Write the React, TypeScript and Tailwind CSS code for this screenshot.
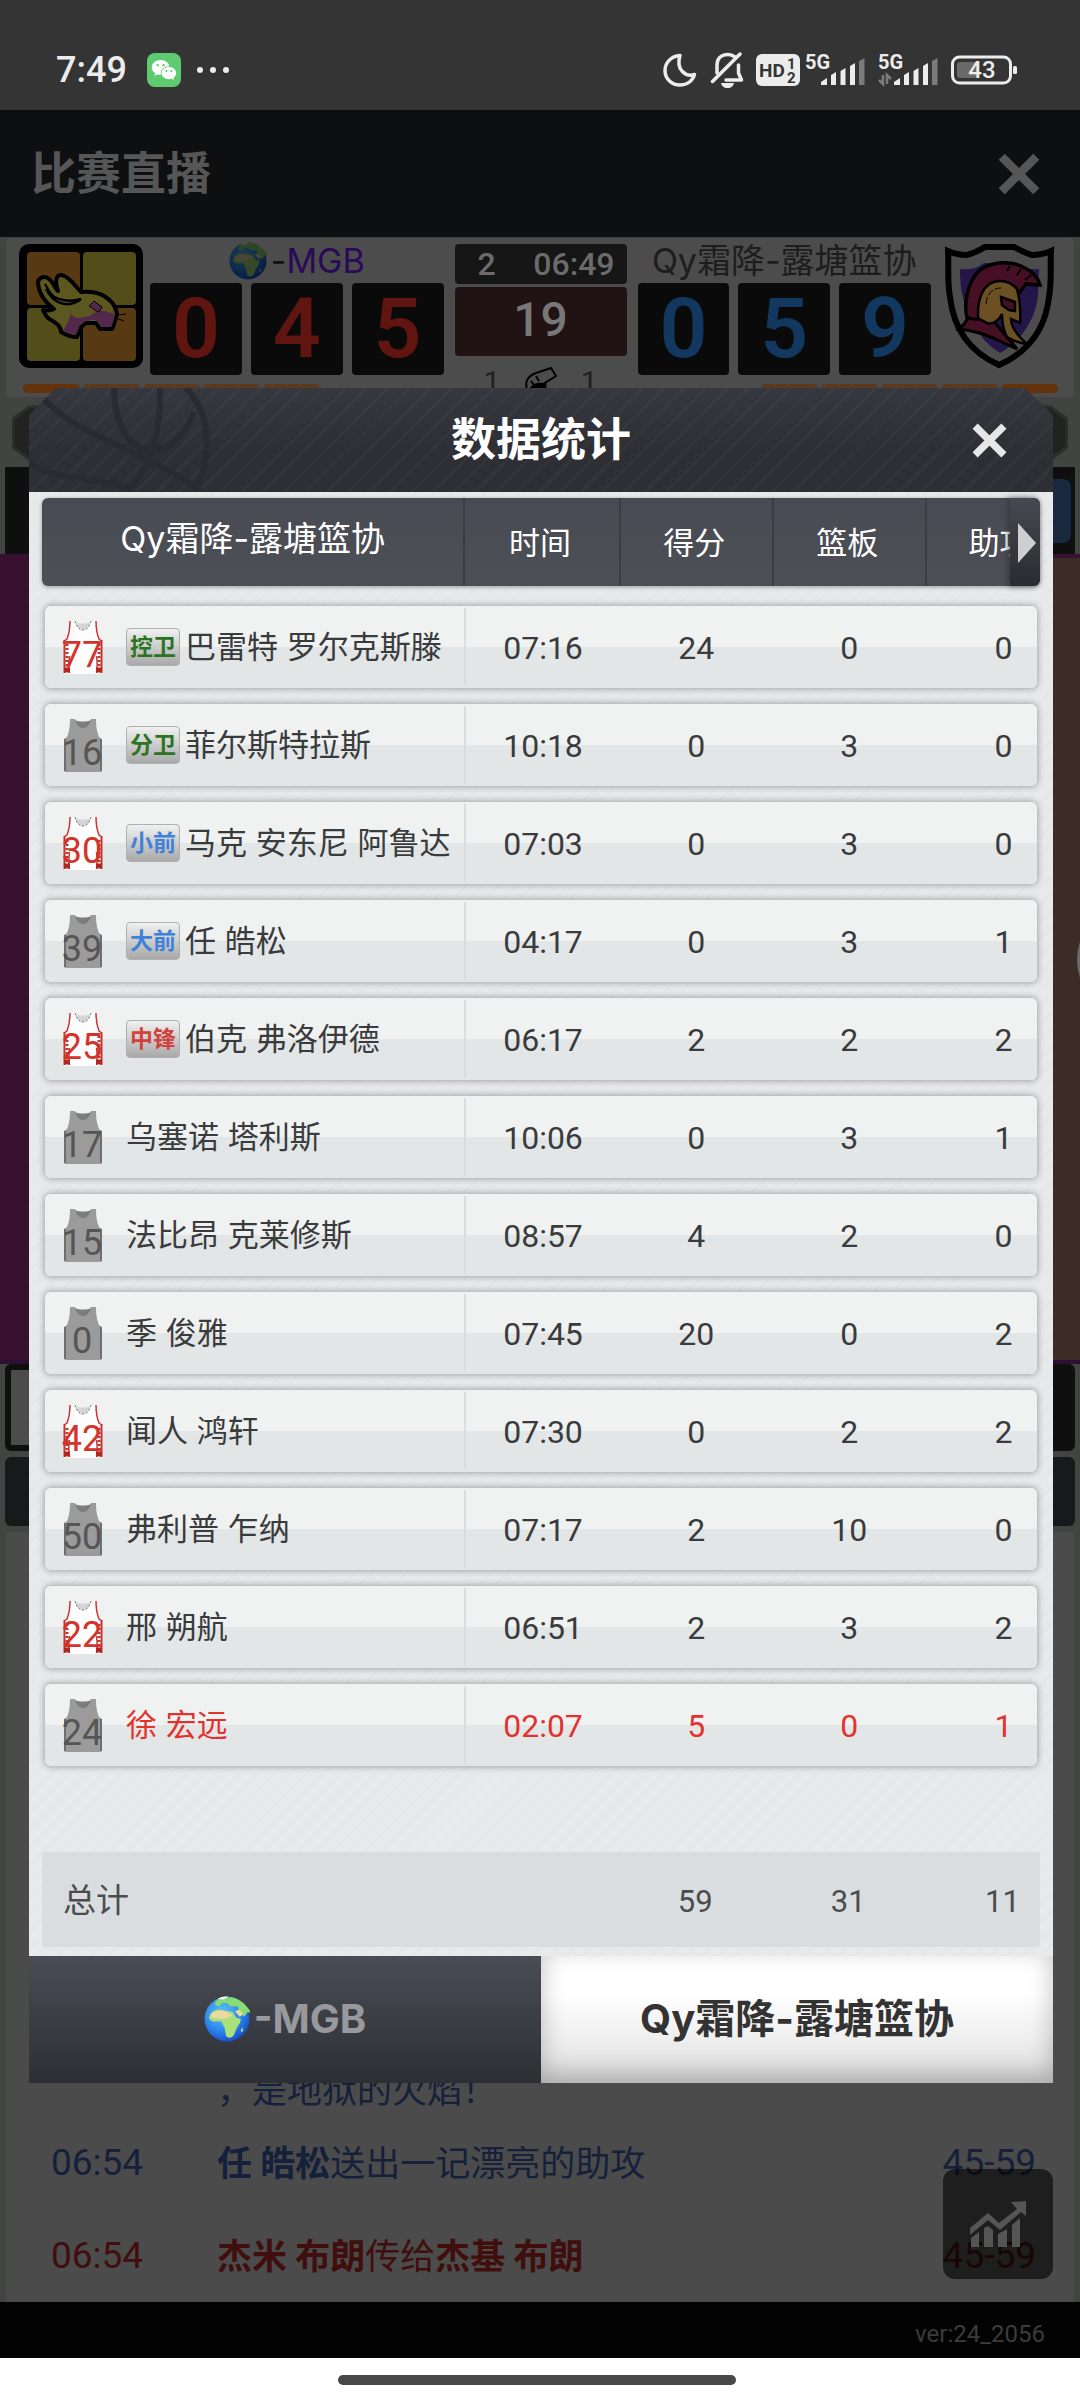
import { ReactNode, useState } from "react"
import { clsx } from "clsx"
import { AiFillWechat } from "react-icons/ai"

type Player = {
  number: string
  home: boolean
  position?: "控卫" | "分卫" | "小前" | "大前" | "中锋"
  name: string
  stats: string[]
  highlight?: boolean
}

const players: Player[] = [
  { number: "77", home: true, position: "控卫", name: "巴雷特 罗尔克斯滕", stats: ["07:16", "24", "0", "0"] },
  { number: "16", home: false, position: "分卫", name: "菲尔斯特拉斯", stats: ["10:18", "0", "3", "0"] },
  { number: "30", home: true, position: "小前", name: "马克 安东尼 阿鲁达", stats: ["07:03", "0", "3", "0"] },
  { number: "39", home: false, position: "大前", name: "任 皓松", stats: ["04:17", "0", "3", "1"] },
  { number: "25", home: true, position: "中锋", name: "伯克 弗洛伊德", stats: ["06:17", "2", "2", "2"] },
  { number: "17", home: false, name: "乌塞诺 塔利斯", stats: ["10:06", "0", "3", "1"] },
  { number: "15", home: false, name: "法比昂 克莱修斯", stats: ["08:57", "4", "2", "0"] },
  { number: "0", home: false, name: "季 俊雅", stats: ["07:45", "20", "0", "2"] },
  { number: "42", home: true, name: "闻人 鸿轩", stats: ["07:30", "0", "2", "2"] },
  { number: "50", home: false, name: "弗利普 乍纳", stats: ["07:17", "2", "10", "0"] },
  { number: "22", home: true, name: "邢 朔航", stats: ["06:51", "2", "3", "2"] },
  { number: "24", home: false, name: "徐 宏远", stats: ["02:07", "5", "0", "1"], highlight: true },
]

const positionColors = {
  控卫: "text-[#2c7423]",
  分卫: "text-[#2c7423]",
  小前: "text-[#3f82d8]",
  大前: "text-[#3f82d8]",
  中锋: "text-[#d2423e]",
}

const columns = "grid grid-cols-[421fr_155fr_153fr_153fr_115fr]"
const rowColumns = "grid grid-cols-[421fr_153fr_153fr_153fr_111fr]"
const digits = "font-['Roboto','Noto_Sans_CJK_SC',sans-serif]"

function CloseIcon({ className }: { className: string }) {
  return (
    <svg viewBox="0 0 34 34" className={className} stroke="currentColor" strokeWidth="7" aria-hidden="true">
      <path d="M3 3 31 31M31 3 3 31" />
    </svg>
  )
}

function Globe({ className }: { className: string }) {
  return (
    <svg viewBox="0 0 40 40" className={className} aria-hidden="true">
      <defs>
        <radialGradient id="sea" cx="0.4" cy="0.35" r="0.7">
          <stop offset="0" stopColor="#5cc3f5" />
          <stop offset="0.6" stopColor="#2b86ec" />
          <stop offset="1" stopColor="#1747c8" />
        </radialGradient>
      </defs>
      <circle cx="20" cy="20" r="19.5" fill="url(#sea)" />
      <path
        d="M13 2.500C10 4 9 6 10 8l3 1 3-3 4 0 3 3 6 0 2 5 4 4 3-4 3 1C39 10 33 3.500 26 1.500 22 .5 17 .5 13 2.500Z"
        fill="#86dd74"
      />
      <path
        d="M5 17c1-3 4-5 8-5l7 1 5 1 3 5 4 1c0 4-3 6-4 9l-2 5c-2 3-6 3-7 0l-1-6-2-4-1-2c-3 0-7 1-9-1-2-1-2-3-1-4Z"
        fill="#a9e07b"
      />
      <path d="M6 16c4-4 9-4 14-2l5 3-8 3-10-1Z" fill="#ead9a0" />
      <path d="m27 13 4-1 3 4-3 2Z" fill="#ead9a0" />
      <path d="m32 30 1.500-3 .5 3-1.500 2Z" fill="#a9e07b" />
      <path d="M12 2.500c3-2 6-2 9-2l-4 2.500Z" fill="#fff" />
    </svg>
  )
}

function SignalBars() {
  return (
    <>
      <path d="M16 31v-3l6-4v7zM26 31V21l5-3v13zM35.500 31V17l5-3v17zM45 31V12l5-3v22z" fill="#ececec" />
      <path d="M54 31V7l5.500-3v27z" fill="#7b7b7b" />
    </>
  )
}

function StatusBar() {
  return (
    <div className="flex h-[110px] items-center justify-between bg-[#343434] pt-[30px] pr-[62px] pl-[56px] text-[#ececec]">
      <div className="flex items-center">
        <span className={clsx(digits, "w-[70px] text-[36px] leading-10 font-medium")}>7:49</span>
        <span className="ml-[21px] flex size-[34px] items-center justify-center rounded-lg bg-[#5ecb71]">
          <AiFillWechat className="size-[28px] text-white" />
        </span>
        <span className="ml-4 flex gap-[7px]">
          <span className="size-[6px] rounded-full bg-[#ececec]" />
          <span className="size-[6px] rounded-full bg-[#ececec]" />
          <span className="size-[6px] rounded-full bg-[#ececec]" />
        </span>
      </div>
      <div className="flex items-center">
        <svg viewBox="0 0 34 34" className="size-[34px]" aria-hidden="true">
          <path
            d="M17 2.500C8 3 2 10 2 17.500 2 26 9 32 17 32c7 0 12.500-4 14.500-10.500C23 24.500 12.500 17 17 2.500Z"
            fill="none"
            stroke="#ececec"
            strokeWidth="3.500"
            strokeLinejoin="round"
          />
        </svg>
        <svg viewBox="0 0 36 36" className="ml-[13px] size-[36px]" aria-hidden="true">
          <g fill="none" stroke="#ececec" strokeWidth="3.500" strokeLinejoin="round" strokeLinecap="round">
            <path d="M7 21v-8C7 6 12 2.500 18 2.500c3 0 5 1 7 2.500M28.500 13v8l3 7H16" />
            <path d="M30 2 2.500 29.500" />
          </g>
          <path d="M11 31h13c-1 7-12 7-13 0Z" fill="#ececec" />
        </svg>
        <svg viewBox="0 0 44 32" className="ml-[10px] h-8 w-11" aria-hidden="true">
          <rect width="44" height="32" rx="6" fill="#ececec" />
          <g fill="#343434" fontFamily="Roboto" fontWeight="700">
            <text x="3" y="23" fontSize="19">HD</text>
            <text x="31" y="15" fontSize="15">1</text>
            <text x="31" y="29" fontSize="15">2</text>
          </g>
        </svg>
        <svg viewBox="0 0 60 32" className="ml-[5px] h-8 w-[60px] overflow-visible" aria-hidden="true">
          <text x="0" y="15" fontSize="20" fontFamily="Roboto" fontWeight="700" fill="#ececec">5G</text>
          <SignalBars />
        </svg>
        <svg viewBox="0 0 60 32" className="ml-[13px] h-8 w-[60px] overflow-visible" aria-hidden="true">
          <text x="0" y="15" fontSize="20" fontFamily="Roboto" fontWeight="700" fill="#ececec">5G</text>
          <path d="M5 21v9l-4-4M9 30v-9l4 4" fill="none" stroke="#7b7b7b" strokeWidth="2.500" />
          <SignalBars />
        </svg>
        <svg viewBox="0 0 68 30" className="ml-[12px] h-[30px] w-[68px]" aria-hidden="true">
          <rect x="2.500" y="2" width="58" height="26" rx="7" fill="none" stroke="#ececec" strokeWidth="3" />
          <rect x="7" y="7" width="20" height="16" rx="3" fill="#6a6a6a" />
          <rect x="63" y="11" width="4" height="8" rx="1.500" fill="#ececec" />
          <text x="32" y="23" fontSize="24" fontFamily="Roboto" fontWeight="500" textAnchor="middle" fill="#ececec">43</text>
        </svg>
      </div>
    </div>
  )
}

function CatLogo() {
  return (
    <svg viewBox="0 0 124 124" className="size-[124px] shrink-0" aria-hidden="true">
      <rect width="124" height="124" rx="10" fill="#000" />
      <rect x="8" y="8" width="53" height="53" rx="4" fill="#573a14" />
      <rect x="64" y="8" width="53" height="53" rx="4" fill="#534e19" />
      <rect x="8" y="64" width="53" height="53" rx="4" fill="#534e19" />
      <rect x="64" y="64" width="53" height="53" rx="4" fill="#573a14" />
      <path
        d="M19 37c3-5 8-5 11-2 4 3 5 8 9 12-2-6-3-12 0-15 4-3 10 2 14 6l9 10c10-1 18 1 23 4 7 4 12 11 13 18-2 5-2 10-5 15H81l-4-6H67l-5 4-4 10c-6 0-11-2-16-5 0-7-7-10-13-14-3-3-4-6-5-8 4 1 8 0 11-1-9-7-16-17-16-28Z"
        fill="#5c571e"
        stroke="#000"
        strokeWidth="4"
        strokeLinejoin="round"
      />
      <path
        d="M52 64c-2 6 2 9 7 10l12-2c4-4 9-5 14-5 5 1 9 2 11 4-1 4-2 8-4 12H82l-5-7c-6 0-12 0-16 5l-4 10c-4 0-9-2-13-5 5-6 8-13 8-22Z"
        fill="#52294a"
      />
      <path d="M27 45c4 8 18 15 35 10-10 8-26 8-35-10Z" fill="none" stroke="#000" strokeWidth="2.500" />
      <path d="M26 40c3 6 5 9 9 13" fill="none" stroke="#000" strokeWidth="2" />
      <path d="m70 62 5-5 8 6-3 5c-3 0-5-3-10-6Z" fill="#52294a" stroke="#000" strokeWidth="1" />
      <path d="M97 71l10-1M97 74l8 3" stroke="#000" strokeWidth="1" />
    </svg>
  )
}

function SpartanLogo() {
  return (
    <svg viewBox="0 0 110 126" className="h-[126px] w-[110px] shrink-0" aria-hidden="true">
      <path
        d="M3 7c7 3 13 4 19 4 8-2 12-5 18-8h29c6 3 11 6 18 8 7 0 12-1 19-4-1 14 1 30-2 46-4 35-23 56-50 68C27 109 9 88 5 53 2 37 4 21 3 7Z"
        fill="#4c4c4c"
        stroke="#000"
        strokeWidth="6"
      />
      <path d="M15 25c9 1 16 0 24-6h30c8 5 16 7 25 6-1 15 0 26-3 38-6 20-18 36-36 46-16-10-28-26-34-46-5-14-6-24-6-38Z" fill="#25164a" />
      <path
        d="M23 77c-3-9-3-17-1-26 2-10 5-17 11-23 6-6 13-8 21-9 10-1 19 1 26 5 8 4 13 9 15 17l-14-1-7 9-12-5-20 0-6 14-3 20Z"
        fill="#460f24"
        stroke="#000"
        strokeWidth="3.500"
      />
      <path d="m62 27 3-5M72 31l4-6M80 36l6-5" stroke="#000" strokeWidth="2" />
      <path d="M14 85c4-3 7-7 9-11 8 2 15 2 23 0l10 12 16 19-13-6C43 91 28 86 14 85Z" fill="#460f24" stroke="#000" strokeWidth="3" />
      <path
        d="M33 74c0-9 0-17 4-25 4-8 10-12 18-12 7 0 13 3 17 8 3 11 4 22 3 34l-9-4c0 9 7 17 16 25-8-1-15-4-20-7-4-7-5-14-5-23-3 7-10 11-15 9Z"
        fill="#6b5023"
        stroke="#000"
        strokeWidth="2.500"
      />
      <path d="m56 53 14 5v9l-6-1-7-5Z" fill="#460f24" stroke="#000" strokeWidth="2.500" />
      <path d="M41 60c1-10 6-16 15-16" fill="none" stroke="#000" strokeWidth="1" strokeDasharray="7 2" />
    </svg>
  )
}

function Team({ name, score, color }: { name: ReactNode; score: string; color: string }) {
  return (
    <div className="flex min-w-0 flex-1 flex-col">
      <div className="flex h-[39px] items-center justify-center pb-1.5 text-[34px] leading-8 whitespace-nowrap">{name}</div>
      <div className="grid grid-cols-3 gap-[9px]">
        {score.split("").map((digit, i) => (
          <div
            key={i}
            className={clsx(digits, color, "flex h-[92px] items-center justify-center rounded-sm bg-[#0a0a0a] text-[84px] leading-none font-semibold")}
          >
            {digit}
          </div>
        ))}
      </div>
    </div>
  )
}

function Timeouts({ reverse }: { reverse?: boolean }) {
  return (
    <div className={clsx("flex gap-[3px]", reverse && "flex-row-reverse")}>
      {[0, 1, 2, 3, 4].map((i) => (
        <span key={i} className={clsx("h-[9px] w-[57px] rounded-full", i === 0 ? "bg-[#64330c]" : "bg-[#5b3a20]")} />
      ))}
    </div>
  )
}

function Scoreboard() {
  return (
    <section className="mx-[5px] flex h-[161px] flex-col rounded-md border border-[#424242] bg-[#4c4c4c] pt-[6px]">
      <div className="flex items-start pr-[19px] pl-[13px]">
        <CatLogo />
        <div className="ml-[7px] flex flex-1">
          <Team
            score="045"
            color="text-[#611510]"
            name={
              <>
                <Globe className="size-[38px] brightness-[0.32]" />
                <span className="ml-1 text-[#111]">-</span>
                <span className="text-[#2a0a58]">MGB</span>
              </>
            }
          />
          <div className={clsx(digits, "mx-[11px] flex w-[172px] flex-col gap-[3px] text-[#6b6b6b]")}>
            <div className="flex h-10 items-center justify-between rounded-sm bg-[#161616] pr-3 pl-[23px] text-[32px] leading-9 font-medium">
              <span>2</span>
              <span>06:49</span>
            </div>
            <div className="flex h-[69px] items-center justify-center rounded-sm bg-[#211314] pb-1 text-[48px] leading-none font-medium text-[#777]">
              19
            </div>
            <div className="flex h-[34px] items-center justify-between px-[29px] pt-3 text-[30px] leading-8 text-[#202020]">
              <span>1</span>
              <svg viewBox="0 0 34 30" className="h-[30px] w-[34px]" aria-hidden="true">
                <path d="M3 22C0 13 6 8 12 6L27 1l5 8-11 7c2 9-2 14-9 15S5 29 3 22Z" fill="#4c4c4c" stroke="#000" strokeWidth="2" />
                <path d="M5 22c4-6 9-7 16-6 2 9-2 14-9 15S5 29 5 22Z" fill="#000" />
                <path d="m7 14 3 4M12 9l3 5" stroke="#000" strokeWidth="2" />
              </svg>
              <span>1</span>
            </div>
          </div>
          <Team score="059" color="text-[#133860]" name={<span className="text-[#1d1d1d]">Qy霜降-露塘篮协</span>} />
        </div>
        <div className="ml-[14px]">
          <SpartanLogo />
        </div>
      </div>
      <div className="-mt-[9px] flex justify-between pr-[16px] pl-[17px]">
        <Timeouts />
        <Timeouts reverse />
      </div>
    </section>
  )
}

function Arrow({ flip }: { flip?: boolean }) {
  return (
    <svg viewBox="0 0 34 56" className={clsx("h-14 w-[34px]", flip && "rotate-180")} aria-hidden="true">
      <path d="M1 14 17 2h16v52H17L1 42Z" fill="#222321" stroke="#2d2f2d" strokeWidth="3" />
    </svg>
  )
}

function Event({ time, score, color, children }: { time: string; score: string; color: string; children: ReactNode }) {
  return (
    <li className={clsx("flex h-[93px] items-center pr-[38px] pl-[45px]", color)}>
      <time className={clsx(digits, "w-[166px] text-[37px] leading-10")}>{time}</time>
      <p className="flex-1 text-[35px] leading-10">{children}</p>
      <span className={clsx(digits, "text-[37px] leading-10")}>{score}</span>
    </li>
  )
}

function LivePage() {
  return (
    <div className="flex min-h-screen flex-col bg-[#424442]">
      <StatusBar />
      <header className="flex h-[127px] items-center justify-between bg-[#0e0f11] pr-[40px] pl-[31px] text-[#565656]">
        <h1 className="text-[45px] leading-[60px] font-bold">比赛直播</h1>
        <button type="button" aria-label="关闭直播">
          <CloseIcon className="size-[42px]" />
        </button>
      </header>
      <Scoreboard />
      <div className="flex h-[69px] items-center justify-between px-3">
        <Arrow />
        <Arrow flip />
      </div>
      <div className="mx-[5px] flex h-[87px] items-center justify-end bg-[#0f0f0f] px-[4px]">
        <div className="h-[64px] w-[300px] rounded-lg bg-[#1a2840]" />
      </div>
      <div className="flex h-[810px] items-center justify-end overflow-hidden bg-linear-to-r from-[#37112f] from-50% to-[#3b2d25] to-50% shadow-[inset_0_4px_0_#37112f,inset_0_-4px_0_#2b1235]">
        <div className="-mr-[112px] size-[115px] rounded-full bg-[#6a6a6a]" />
      </div>
      <div className="mx-[5px] flex h-[87px] rounded-md border-6 border-[#0f0f0f] bg-linear-to-r from-[#4c4c4c] from-50% to-[#0f0f0f] to-50%" />
      <div className="mx-[5px] mt-1.5 h-[69px] rounded-md bg-[#17191a]" />
      <ol className="mx-[5px] mt-[6px] flex flex-1 flex-col justify-end rounded-t-md border-x border-[#424242] bg-[#4b4b4b]">
        <li className="pb-[4px] pl-[211px] text-[35px] leading-[44px] text-[#15203a]">，是地狱的火焰！</li>
        <Event time="06:54" score="45-59" color="text-[#15203a]">
          <b>任 皓松</b>送出一记漂亮的助攻
        </Event>
        <Event time="06:54" score="45-59" color="text-[#3f0e0d]">
          <b>杰米 布朗</b>传给<b>杰基 布朗</b>
        </Event>
      </ol>
      <footer className={clsx(digits, "flex h-14 items-center justify-end bg-[#030303] pt-2 pr-[35px] text-[24px] leading-8 text-[#3c3c3c]")}>
        ver:24_2056
      </footer>
      <div className="flex h-[42px] items-center justify-center bg-white pt-2 pr-1.5 pb-1.5">
        <div className="h-[10px] w-[37%] rounded-full bg-[#484848]" />
      </div>
    </div>
  )
}

function Jersey({ number, home }: { number: string; home: boolean }) {
  return (
    <svg viewBox="0 0 40 54" className="h-[54px] w-10 shrink-0 overflow-visible" aria-hidden="true">
      <path
        d="M7 1h5c2 6 5 8 8 8s6-2 8-8h5c0 8 1 13 3 18l3 2v31c0 1-1 2-2 2H3c-1 0-2-1-2-2V21l3-2C6 14 7 9 7 1Z"
        fill={home ? "#fdfdfd" : "#9b9b9b"}
      />
      <path d="M12 2c4 2 12 2 16 0-2 6-5 8-8 8s-6-2-8-8Z" fill={home ? "#d5d5d5" : "#7c7c7c"} />
      {home ? (
        <>
          <path d="M12 1c2 7 5 9 8 9s6-2 8-9" fill="none" stroke="#777" strokeWidth="1" strokeDasharray="2 2" />
          <path d="M7 1c0 8-1 13-3 18l-3 2M33 1c0 8 1 13 3 18l3 2" fill="none" stroke="#c33" strokeWidth="1.500" />
          <path d="M1.500 20v33M38.500 20v33" stroke="#c5352d" strokeWidth="2" />
          <path d="M4 24v28M36 24v28" stroke="#c5352d" strokeWidth="3" strokeDasharray="2 2" />
          <path d="M6.500 36c-1 7-1 12 0 17M33.500 36c1 7 1 12 0 17" fill="none" stroke="#c5352d" strokeWidth="1.500" />
          <path d="M1 50h6M33 50h6" stroke="#b3261f" strokeWidth="5" />
        </>
      ) : (
        <path d="M2 21v32M38 21v32" stroke="#6e6e6e" strokeWidth="2" />
      )}
      <text x="19" y="47" fontSize="36" fontFamily="Roboto" textAnchor="middle" fill={home ? "#d3332b" : "#555"}>
        {number}
      </text>
    </svg>
  )
}

function PlayerRow({ player }: { player: Player }) {
  return (
    <tr
      className={clsx(
        rowColumns,
        "mx-[3px] h-[82px] items-center rounded-md bg-linear-to-b from-[#f0f2f2] from-50% to-[#e2e6e7] to-50% shadow-[0_0_6px_1px_rgba(0,0,0,0.3)]",
        player.highlight ? "text-[#e3322d]" : "text-[#3a3b3c]",
      )}
    >
      <th scope="row" className="flex h-[78px] items-center border-r-2 border-[#dadddd] pl-[18px] font-normal">
        <Jersey number={player.number} home={player.home} />
        <span className="ml-[23px] flex items-center text-[31px] leading-10 whitespace-nowrap">
          {player.position && (
            <span
              className={clsx(
                "mr-[5px] flex h-[38px] w-[54px] items-center justify-center rounded-sm border border-[#b0b0b0] bg-linear-to-b from-[#f1f1f1] to-[#a9a9a9] text-[23px] leading-8 font-bold",
                positionColors[player.position],
              )}
            >
              {player.position}
            </span>
          )}
          {player.name}
        </span>
      </th>
      {player.stats.map((value, i) => (
        <td key={i} className={clsx(digits, "pt-0.5 text-center text-[32px] leading-10 last:pl-11")}>
          {value}
        </td>
      ))}
    </tr>
  )
}

function StatsTable() {
  return (
    <table className="block">
      <thead className="relative block">
        <tr className={clsx(columns, "h-[88px] overflow-hidden rounded-md bg-linear-to-b from-[#494b54] to-[#4c4f54] text-white shadow-[0_1px_4px_rgba(0,0,0,0.35)]")}>
          <th className="flex items-center justify-center pb-2 text-[34px] font-normal whitespace-nowrap">Qy霜降-露塘篮协</th>
          {["时间", "得分", "篮板", "助攻"].map((label) => (
            <th
              key={label}
              className="flex items-center justify-center border-l-2 border-[#3b3d44] pt-0.5 pr-1 text-[31px] font-normal whitespace-nowrap last:pl-9"
            >
              {label}
            </th>
          ))}
        </tr>
        <tr className="absolute inset-y-0 right-0 block">
          <td className="block h-full">
            <button
              type="button"
              aria-label="更多数据"
              className="flex h-full w-[30px] items-center justify-center rounded-r-md bg-linear-to-b from-[#474951] to-[#2b2c31] pt-0.5 pl-1 shadow-[-2px_0_6px_rgba(40,41,46,0.6)]"
            >
              <svg viewBox="0 0 18 40" className="h-10 w-[18px]" fill="#cfcfd1" aria-hidden="true">
                <path d="M0 0 18 20 0 40Z" />
              </svg>
            </button>
          </td>
        </tr>
      </thead>
      <tbody className="mt-5 flex flex-col gap-4">
        {players.map((player) => (
          <PlayerRow key={player.number} player={player} />
        ))}
      </tbody>
      <tfoot className="mt-[86px] block">
        <tr className={clsx(columns, "h-[95px] items-center rounded-xs bg-[#d9dde0] text-[#4a4c4e]")}>
          <th scope="row" className="pl-[21px] text-left text-[33px] leading-10 font-normal">总计</th>
          {["", "59", "31", "11"].map((value, i) => (
            <td key={i} className={clsx(digits, "pt-1 text-center text-[31px] leading-10 last:pl-10")}>
              {value}
            </td>
          ))}
        </tr>
      </tfoot>
    </table>
  )
}

function StatsDialog() {
  const [team, setTeam] = useState("away")
  const tab = (active: boolean) =>
    clsx(
      "flex h-[127px] items-center justify-center pb-0.5 text-[40px] leading-[56px] font-bold",
      active
        ? "bg-linear-to-b from-white from-30% to-[#dedede] text-[#333] shadow-[inset_0_-8px_24px_rgba(0,0,0,0.25)]"
        : "bg-linear-to-b from-[#4a4d56] to-[#2e2f35] text-[#98999c]",
    )

  return (
    <div role="dialog" aria-label="数据统计" className="absolute top-[388px] right-[27px] left-[29px] flex flex-col">
      <div className="relative flex h-[104px] items-center justify-center overflow-hidden bg-[repeating-linear-gradient(135deg,transparent_0_13px,rgba(255,255,255,0.03)_13px_15px),linear-gradient(#36383f,#2e2f35_60%)] [clip-path:polygon(27px_0,calc(100%-28px)_0,100%_27px,100%_100%,0_100%,0_27px)]">
        <svg viewBox="0 0 190 104" className="absolute top-0 left-0 h-[104px] w-[190px]" fill="none" stroke="#292b32" strokeWidth="6" aria-hidden="true">
          <path d="M12 8c28 32 74 46 110 66 20 10 36 18 50 30" />
          <path d="M85 0c0 28 10 60 36 62 24 0 36-18 44-38" />
          <path d="M157 0c28 30 24 70 10 104" />
          <path d="M131 0c1 40-6 72-31 104" />
          <path d="M0 75c30 20 64 12 102 26" />
        </svg>
        <h2 className="text-[45px] leading-[60px] font-bold text-white">数据统计</h2>
        <button type="button" aria-label="关闭" className="absolute top-[35px] right-[46px] text-[#e6e6e8]">
          <CloseIcon className="size-[35px]" />
        </button>
      </div>
      <div className="bg-[#e7e9eb] bg-[repeating-linear-gradient(135deg,transparent_0_10px,rgba(0,0,0,0.01)_10px_12px)] px-[13px] pt-[6px] pb-[9px]">
        <StatsTable />
      </div>
      <div role="tablist" className="grid grid-cols-2">
        <button type="button" role="tab" aria-selected={team === "home"} className={tab(team === "home")} onClick={() => setTeam("home")}>
          <Globe className="size-[46px]" />
          <span className="ml-1">-MGB</span>
        </button>
        <button type="button" role="tab" aria-selected={team === "away"} className={tab(team === "away")} onClick={() => setTeam("away")}>
          Qy霜降-露塘篮协
        </button>
      </div>
    </div>
  )
}

export default function App() {
  return (
    <main lang="zh-CN" className="relative font-['Inter','Noto_Sans_CJK_SC',sans-serif]">
      <LivePage />
      <button
        type="button"
        aria-label="数据统计"
        className="absolute right-[27px] bottom-[121px] flex size-[110px] items-center justify-center rounded-xl bg-black/60"
      >
        <svg viewBox="0 0 58 46" className="h-[46px] w-[58px]" fill="#555" aria-hidden="true">
          <path d="M1 27 19 12l11 10L48 8l-6-7 15-1v15l-5-4-21 18-12-10L1 34Z" />
          <path d="M2 37l8-6v15H2zM15 27l4-2 5 4v17h-9zM29 33l9-5v18h-9zM43 24l8-7v29h-8z" />
        </svg>
      </button>
      <StatsDialog />
    </main>
  )
}
